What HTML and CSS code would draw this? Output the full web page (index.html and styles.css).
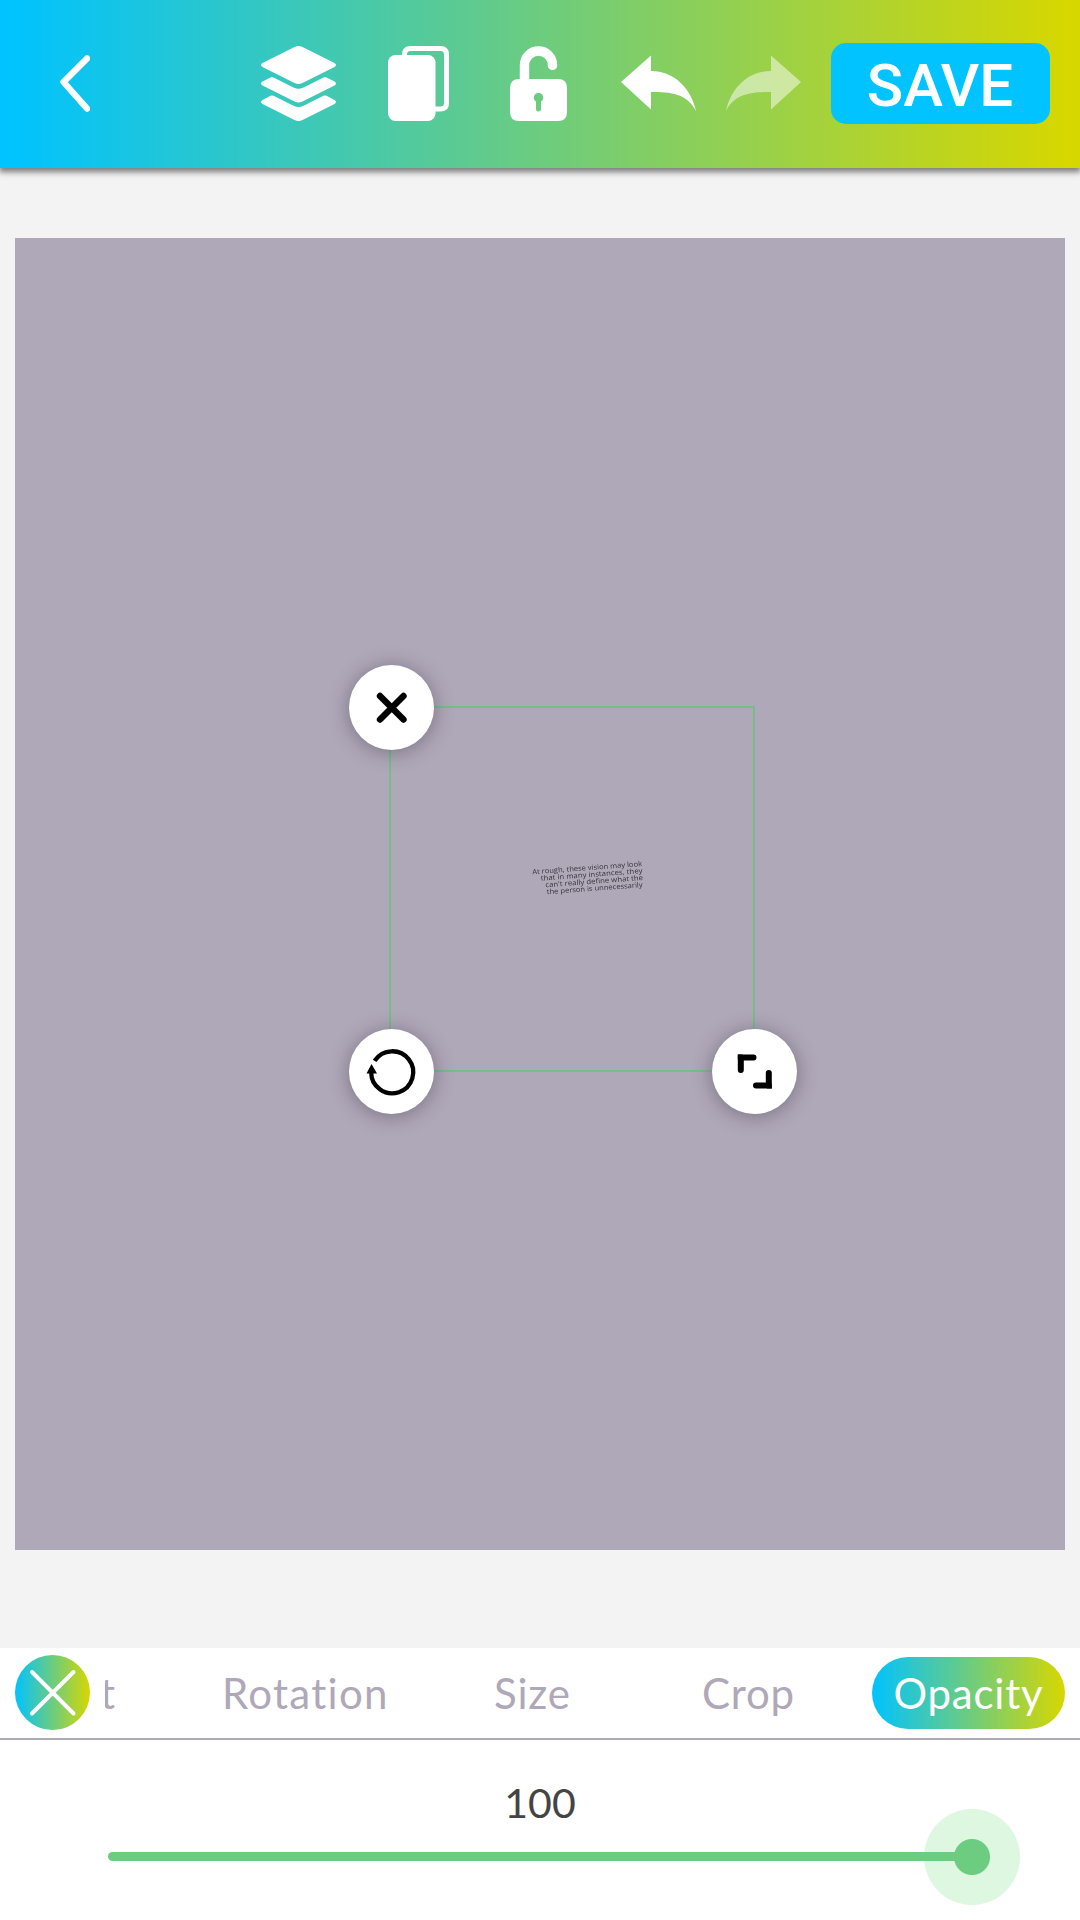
FILE: index.html
```html
<!DOCTYPE html>
<html lang="en">
<head>
<meta charset="utf-8">
<title>Editor</title>
<link rel="stylesheet" href="styles.css">
</head>
<body>
<div class="app">
  <header class="toolbar">
    <svg class="back" width="30" height="57" viewBox="0 0 30 57"><path d="M27 3.5 3.5 27 27 53.5" fill="none" stroke="#fff" stroke-width="6.4" stroke-linecap="round" stroke-linejoin="round"/></svg>
    <div class="tools">
      <svg width="75" height="75" viewBox="0 0 75 75" fill="#fff">
        <path d="M33.500 1Q37.500-1 41.500 1L73.500 17Q76.500 19 73.500 21L41.500 37Q37.500 39 33.500 37L1.500 21Q-1.500 19 1.500 17Z"/>
        <path d="M1.500 35.500 9.500 31.400Q11 30.600 12.500 31.400L33 41.700Q37.500 43.700 42 41.700L62.500 31.400Q64 30.600 65.500 31.400L73.500 35.500Q76.500 37.500 73.500 39.500L41.500 55.600Q37.500 57.600 33.500 55.600L1.500 39.500Q-1.500 37.500 1.500 35.500Z"/>
        <path d="M1.500 53.900 9.500 49.800Q11 49 12.500 49.800L33 60.100Q37.500 62.100 42 60.100L62.500 49.800Q64 49 65.500 49.800L73.500 53.900Q76.500 55.900 73.500 57.900L41.500 74Q37.500 76 33.500 74L1.500 57.900Q-1.500 55.900 1.500 53.900Z"/>
      </svg>
      <svg class="copy" width="61" height="75" viewBox="0 0 61 75"><rect y="9" width="47.500" height="66" rx="7.500" fill="#fff"/><path d="M16.500 11V8.500Q16.500 2.500 22.500 2.500H52.500Q58.500 2.500 58.500 8.500V57Q58.500 63 52.500 63H46" fill="none" stroke="#fff" stroke-width="5"/></svg>
      <svg class="lock" width="57" height="75" viewBox="0 0 57 75"><path d="M14.500 36V19a14 14 0 0 1 28 0" fill="none" stroke="#fff" stroke-width="9.400"/><path d="M37.800 18.500h9.400V20a4.700 4 0 0 1-9.400 0Z" fill="#fff"/><path fill="#fff" fill-rule="evenodd" d="M9 33H48Q57 33 57 42V66Q57 75 48 75H9Q0 75 0 66V42Q0 33 9 33ZM28.500 47a4.600 4.600 0 0 0-2.500 8.500V63a2.500 2.500 0 0 0 5 0V55.500a4.600 4.600 0 0 0-2.500-8.500Z"/></svg>
      <svg class="undo" width="75" height="56" viewBox="0 0 75 56"><path d="M0 27 30 .5V16C53 16 70 33 75 56 67 40 52 36.500 30 37V54.500Z" fill="#fff"/></svg>
      <svg class="redo" width="75" height="56" viewBox="0 0 75 56"><path d="M75 27 45 .5V16C22 16 5 33 0 56 8 40 23 36.500 45 37V54.500Z" fill="#fff"/></svg>
    </div>
    <button class="save">SAVE</button>
  </header>

  <main class="workspace">
    <div class="canvas">
      <div class="selection">
        <svg class="note" width="130" height="50" viewBox="0 0 130 50">
          <g transform="rotate(-4.300 115 12)">
            <text x="5" y="14" textLength="110" lengthAdjust="spacingAndGlyphs">At rough, these vision may look</text>
            <text x="13" y="21" textLength="102" lengthAdjust="spacingAndGlyphs">that in many instances, they</text>
            <text x="17" y="28" textLength="98" lengthAdjust="spacingAndGlyphs">can't really define what the</text>
            <text x="18" y="35" textLength="96" lengthAdjust="spacingAndGlyphs">the person is unnecessarily</text>
          </g>
        </svg>
        <div class="handle delete"><svg width="84" height="84" viewBox="0 0 84 84"><path d="M31 31 54.500 54.500M54.500 31 31 54.500" stroke="#000" stroke-width="6.400" stroke-linecap="round"/></svg></div>
        <div class="handle rotate"><svg width="84" height="84" viewBox="0 0 84 84"><path d="M25.600 31.800A21 21 0 1 1 22.200 43" fill="none" stroke="#000" stroke-width="4.300"/><path d="M22.500 35 17.500 44.500H28Z"/></svg></div>
        <div class="handle resize"><svg width="84" height="84" viewBox="0 0 84 84"><path d="M41.500 28.500H28.800V41M56.800 44V56.500H44" fill="none" stroke="#000" stroke-width="6" stroke-linecap="round"/><path d="M25.800 25.500h5v5h-5ZM54.800 54.500h5v5h-5Z"/></svg></div>
      </div>
    </div>
  </main>

  <nav class="tabs">
    <button class="close"><svg width="75" height="75" viewBox="0 0 75 75"><path d="M17 17 58.500 58.500M58.500 17 17 58.500" stroke="#fff" stroke-width="4" stroke-linecap="round"/></svg></button>
    <div class="strip">
      <span class="tab cut">t</span>
      <span class="tab rotation">Rotation</span>
      <span class="tab size">Size</span>
      <span class="tab crop">Crop</span>
    </div>
    <span class="tab active">Opacity</span>
  </nav>

  <section class="opacity">
    <output class="value">100</output>
    <div class="slider"><div class="track"></div><div class="thumb"></div></div>
  </section>
</div>
</body>
</html>
```
FILE: styles.css
```css
* { box-sizing: border-box; }
body { margin: 0; background: #fff; }
svg { display: block; flex: none; }
button { border: 0; padding: 0; }
.app { width: 1080px; height: 1920px; display: flex; flex-direction: column; overflow: hidden; font-family: Lato, sans-serif; }

.toolbar {
  height: 168px; flex: none; display: flex; align-items: flex-start;
  padding: 43px 30px 0 60px; position: relative; z-index: 1;
  background: linear-gradient(90deg, #00c3ff 1%, #6ccc7f 50%, #d7d700 99%);
  box-shadow: 0 3px 6px 1px rgba(0, 0, 0, .5);
}
.back { margin-top: 12px; }
.tools { display: flex; align-items: flex-start; margin: 3px 0 0 171px; }
.copy { margin-left: 52px; }
.lock { margin-left: 61px; }
.undo { margin: 9px 0 0 54px; }
.redo { margin: 9px 0 0 30px; opacity: .5; }
.save {
  width: 219px; height: 81px; margin-left: auto; border-radius: 15px;
  background: #00c3ff; color: #fff; font: 500 60px/84px Roboto, sans-serif; padding: 1px 1px 0 0;
}

.workspace { height: 1480px; flex: none; background: #f3f3f3; padding: 70px 15px 98px; }
.canvas { height: 1312px; background: #afa8b8; position: relative; }
.selection { position: absolute; left: 374px; top: 468px; width: 366px; height: 366px; border: 2px solid #78bc8b; }
.note { position: absolute; left: 136px; top: 144px; filter: blur(.7px); opacity: .9; }
.note text { font: 7px "Open Sans", sans-serif; fill: #29252e; }
.handle {
  position: absolute; width: 85px; height: 85px; border-radius: 50%;
  background: #fff; box-shadow: 0 2px 20px rgba(45, 35, 55, .42);
}
.delete { left: -42px; top: -43px; }
.rotate { left: -42px; top: 321px; }
.resize { left: 321px; top: 321px; }

.tabs { height: 92px; flex: none; display: flex; align-items: center; padding: 0 15px; border-bottom: 2px solid #afa8b8; }
.close { width: 75px; height: 75px; margin-bottom: 1px; border-radius: 50%; background: linear-gradient(90deg, #00c3ff, #6ccc7f 50%, #d7d700); }
.strip { flex: 1; display: flex; margin-left: 15px; overflow: hidden; }
.tab { font-size: 42px; line-height: 72px; color: #afa8b8; white-space: nowrap; }
.cut { width: 122px; margin-left: -5px; }
.rotation { width: 272px; letter-spacing: 1.3px; }
.size { width: 208px; letter-spacing: .8px; }
.crop { letter-spacing: .8px; }
.active {
  width: 193px; height: 72px; border-radius: 36px; color: #fff; text-align: center; letter-spacing: .8px;
  background: linear-gradient(90deg, #00c3ff, #6ccc7f 50%, #d7d700);
}

.opacity { flex: 1; display: flex; flex-direction: column; align-items: center; padding-top: 38px; }
.value { font-size: 41px; line-height: 50px; color: #444; }
.slider { width: 864px; height: 96px; margin-top: -19px; display: flex; align-items: center; }
.track { width: 864px; height: 9px; margin-bottom: 1px; flex: none; position: relative; z-index: 1; border-radius: 5px; background: #6ccc7f; }
.thumb {
  width: 96px; height: 96px; flex: none; margin-left: -48px; border-radius: 50%;
  background: radial-gradient(circle, #6ccc7f 17.500px, #ddf7e1 18.500px);
}
```
